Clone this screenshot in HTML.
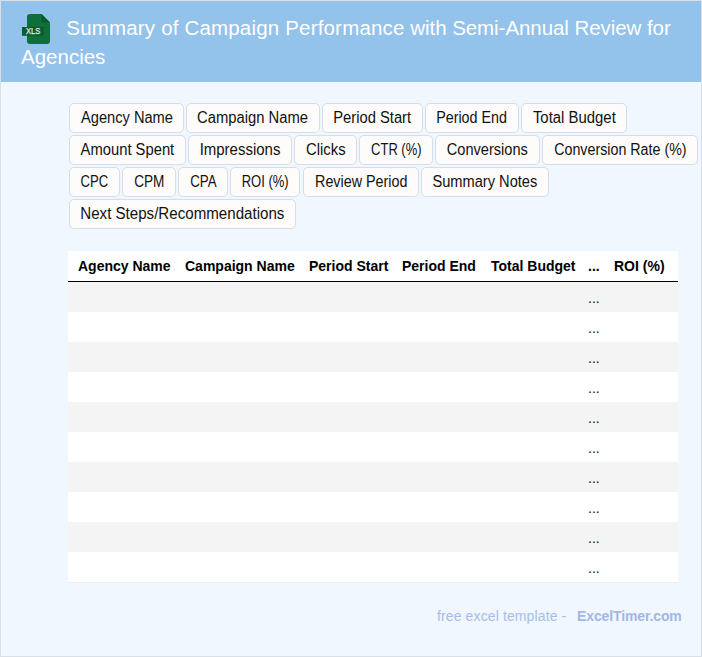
<!DOCTYPE html>
<html><head><meta charset="utf-8">
<style>
*{margin:0;padding:0;box-sizing:border-box}
html,body{width:702px;height:657px;overflow:hidden;background:#f0f7ff}
body{font-family:"Liberation Sans",sans-serif;position:relative}
#frame{position:absolute;left:0;top:0;width:702px;height:657px;border:1px solid #d9e0e8;background:#f0f7ff}
#hdr{position:absolute;left:1px;top:1px;width:700px;height:81px;background:#93c2eb}
.t{position:absolute;white-space:nowrap;color:#fff;font-size:20.5px;line-height:20px}
#icon{position:absolute;left:21px;top:13px;width:32px;height:32px}
.tag{position:absolute;height:30px;border:1px solid #d4dee9;border-radius:5px;background:#fefcfa;font-size:15.6px;line-height:27px;color:#111;text-align:center;white-space:nowrap}
.tag span{display:inline-block}
#tbl{position:absolute;left:68px;top:251px;width:610px;height:331px;background:#fff}
.th{position:absolute;top:0;height:30px;font-weight:bold;font-size:14px;line-height:30px;color:#000;white-space:nowrap}
#hline{position:absolute;left:0;top:30px;width:610px;height:1.4px;background:#000}
.row{position:absolute;left:0;width:610px;height:30px}
.g{background:#f4f4f4}
.dots{position:absolute;left:520px;top:0.5px;font-size:14px;line-height:30px;color:#111}
#foot{position:absolute;top:606px;font-size:14px;line-height:20px;color:#a9bce8;white-space:nowrap}
</style></head><body>
<div id="frame"></div>
<div id="hdr"></div>
<svg style="position:absolute;left:0;top:0" width="60" height="60" viewBox="0 0 60 60">
    <path d="M30 14 H41.5 L50 22.5 V41 Q50 44 47 44 H30 Q27 44 27 41 V17 Q27 14 30 14 Z" fill="#0f6f3b"/>
    <path d="M41.5 14 L50 22.5 H41.5 Z" fill="#0b5a2d"/>
    <rect x="22" y="27" width="21.7" height="8.8" fill="#0b5c2e"/>
    <text x="26" y="34.3" font-family="Liberation Sans" font-weight="normal" font-size="8.6" fill="#e4ece4" stroke="#e4ece4" stroke-width="0.25" textLength="14.3" lengthAdjust="spacingAndGlyphs">XLS</text>
  </svg>
<div class="t" style="left:66.3px;top:18px;letter-spacing:0.18px">Summary of Campaign Performance</div>
<div class="t" style="left:410.3px;top:18px;letter-spacing:-0.06px">with Semi-Annual Review for</div>
<div class="t" style="left:21px;top:47px;letter-spacing:0px">Agencies</div>


<div class="tag" style="left:69px;top:103px;width:115px"><span style="transform:scaleX(0.939)">Agency Name</span></div>
<div class="tag" style="left:186px;top:103px;width:134px"><span style="transform:scaleX(0.949)">Campaign Name</span></div>
<div class="tag" style="left:322px;top:103px;width:101px"><span style="transform:scaleX(0.945)">Period Start</span></div>
<div class="tag" style="left:425px;top:103px;width:94px"><span style="transform:scaleX(0.918)">Period End</span></div>
<div class="tag" style="left:521px;top:103px;width:106px"><span style="transform:scaleX(0.956)">Total Budget</span></div>
<div class="tag" style="left:69px;top:135px;width:117px"><span style="transform:scaleX(0.947)">Amount Spent</span></div>
<div class="tag" style="left:188px;top:135px;width:104px"><span style="transform:scaleX(0.961)">Impressions</span></div>
<div class="tag" style="left:294px;top:135px;width:63px"><span style="transform:scaleX(0.950)">Clicks</span></div>
<div class="tag" style="left:359px;top:135px;width:74px"><span style="transform:scaleX(0.831)">CTR (%)</span></div>
<div class="tag" style="left:435px;top:135px;width:105px"><span style="transform:scaleX(0.936)">Conversions</span></div>
<div class="tag" style="left:542px;top:135px;width:156px"><span style="transform:scaleX(0.915)">Conversion Rate (%)</span></div>
<div class="tag" style="left:69px;top:167px;width:51px"><span style="transform:scaleX(0.841)">CPC</span></div>
<div class="tag" style="left:122px;top:167px;width:54px"><span style="transform:scaleX(0.874)">CPM</span></div>
<div class="tag" style="left:178px;top:167px;width:50px"><span style="transform:scaleX(0.854)">CPA</span></div>
<div class="tag" style="left:230px;top:167px;width:70px"><span style="transform:scaleX(0.835)">ROI (%)</span></div>
<div class="tag" style="left:303px;top:167px;width:116px"><span style="transform:scaleX(0.920)">Review Period</span></div>
<div class="tag" style="left:421px;top:167px;width:128px"><span style="transform:scaleX(0.938)">Summary Notes</span></div>
<div class="tag" style="left:69px;top:199px;width:227px"><span style="transform:scaleX(0.969)">Next Steps/Recommendations</span></div>

<div id="tbl">
  <div class="th" style="left:10px">Agency Name</div>
  <div class="th" style="left:117px">Campaign Name</div>
  <div class="th" style="left:241px">Period Start</div>
  <div class="th" style="left:334px">Period End</div>
  <div class="th" style="left:423px">Total Budget</div>
  <div class="th" style="left:520px">...</div>
  <div class="th" style="left:546px">ROI (%)</div>
  <div id="hline"></div>
  <div class="row g" style="top:31px;height:30px"><div class="dots">...</div></div>
  <div class="row" style="top:61px"><div class="dots">...</div></div>
  <div class="row g" style="top:91px"><div class="dots">...</div></div>
  <div class="row" style="top:121px"><div class="dots">...</div></div>
  <div class="row g" style="top:151px"><div class="dots">...</div></div>
  <div class="row" style="top:181px"><div class="dots">...</div></div>
  <div class="row g" style="top:211px"><div class="dots">...</div></div>
  <div class="row" style="top:241px"><div class="dots">...</div></div>
  <div class="row g" style="top:271px"><div class="dots">...</div></div>
  <div class="row" style="top:301px"><div class="dots">...</div></div>
  <div class="row" style="top:331px;height:1px;background:#eeeeee"></div>
</div>

<div id="foot" style="left:437px;letter-spacing:0.12px">free excel template - </div>
<div id="foot2" style="position:absolute;top:606px;left:577px;font-size:14px;line-height:20px;color:#a3b6e6;font-weight:bold;white-space:nowrap;letter-spacing:-0.12px">ExcelTimer.com</div>
</body></html>
